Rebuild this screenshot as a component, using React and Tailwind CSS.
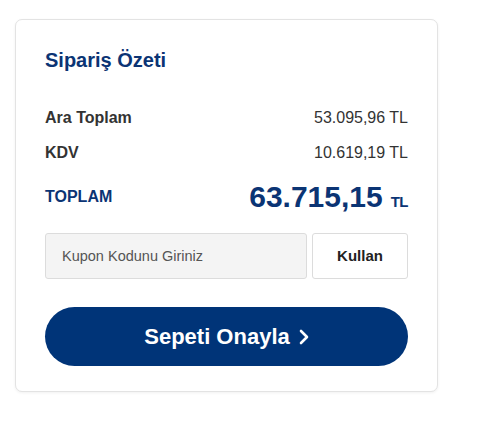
import React from 'react';

const summaryRows = [
    { label: 'Ara Toplam', value: '53.095,96 TL' },
    { label: 'KDV', value: '10.619,19 TL' },
];

export default function App() {
    return (
        <div className="min-h-screen bg-white pt-[19px] pl-[15px]" style={{ fontFamily: '"Liberation Sans", Arial, sans-serif' }}>
            <div className="w-[423px] rounded-[7px] border border-[#e3e3e3] bg-white px-[29px] pt-[29px] pb-[25px] shadow-[0_1px_3px_rgba(0,0,0,0.06)]">
                <h2 className="text-[20px] leading-[22px] font-bold text-[#0b3474]">Sipariş Özeti</h2>

                <div className="mt-[38px] flex flex-col gap-[17px]">
                    {summaryRows.map(row => (
                        <div key={row.label} className="flex items-center justify-between leading-[18px]">
                            <span className="text-[16px] font-bold text-[#333]">{row.label}</span>
                            <span className="text-[16px] text-[#333]">{row.value}</span>
                        </div>
                    ))}
                </div>

                <div className="mt-[18px] flex items-center justify-between">
                    <span className="text-[16px] font-bold text-[#0b3474]">TOPLAM</span>
                    <span className="flex items-baseline gap-[8px] text-[#0b3474]">
                        <span className="text-[30px] leading-[34px] font-bold">63.715,15</span>
                        <span className="text-[15px] font-bold tracking-[-0.5px]">TL</span>
                    </span>
                </div>

                <div className="mt-[19px] flex gap-[5px]">
                    <input
                        type="text"
                        placeholder="Kupon Kodunu Giriniz"
                        className="h-[46px] w-[262px] rounded-[3px] border border-[#dcdcdc] bg-[#f4f4f4] px-[16px] text-[14.5px] text-[#555] placeholder:text-[#555] outline-none"
                    />
                    <button className="h-[46px] flex-1 rounded-[3px] border border-[#dcdcdc] bg-white text-[15px] font-bold text-[#222]">
                        Kullan
                    </button>
                </div>

                <button className="mt-[28px] flex h-[59px] w-full items-center justify-center gap-[9px] rounded-full bg-[#003478] text-[22px] font-bold text-white">
                    Sepeti Onayla
                    <svg className="h-[16px] w-[10px]" viewBox="0 0 10 16" fill="none" stroke="currentColor" strokeWidth="2.6" strokeLinecap="round" strokeLinejoin="round">
                        <path d="M2 2l6 6-6 6" />
                    </svg>
                </button>
            </div>
        </div>
    );
}
